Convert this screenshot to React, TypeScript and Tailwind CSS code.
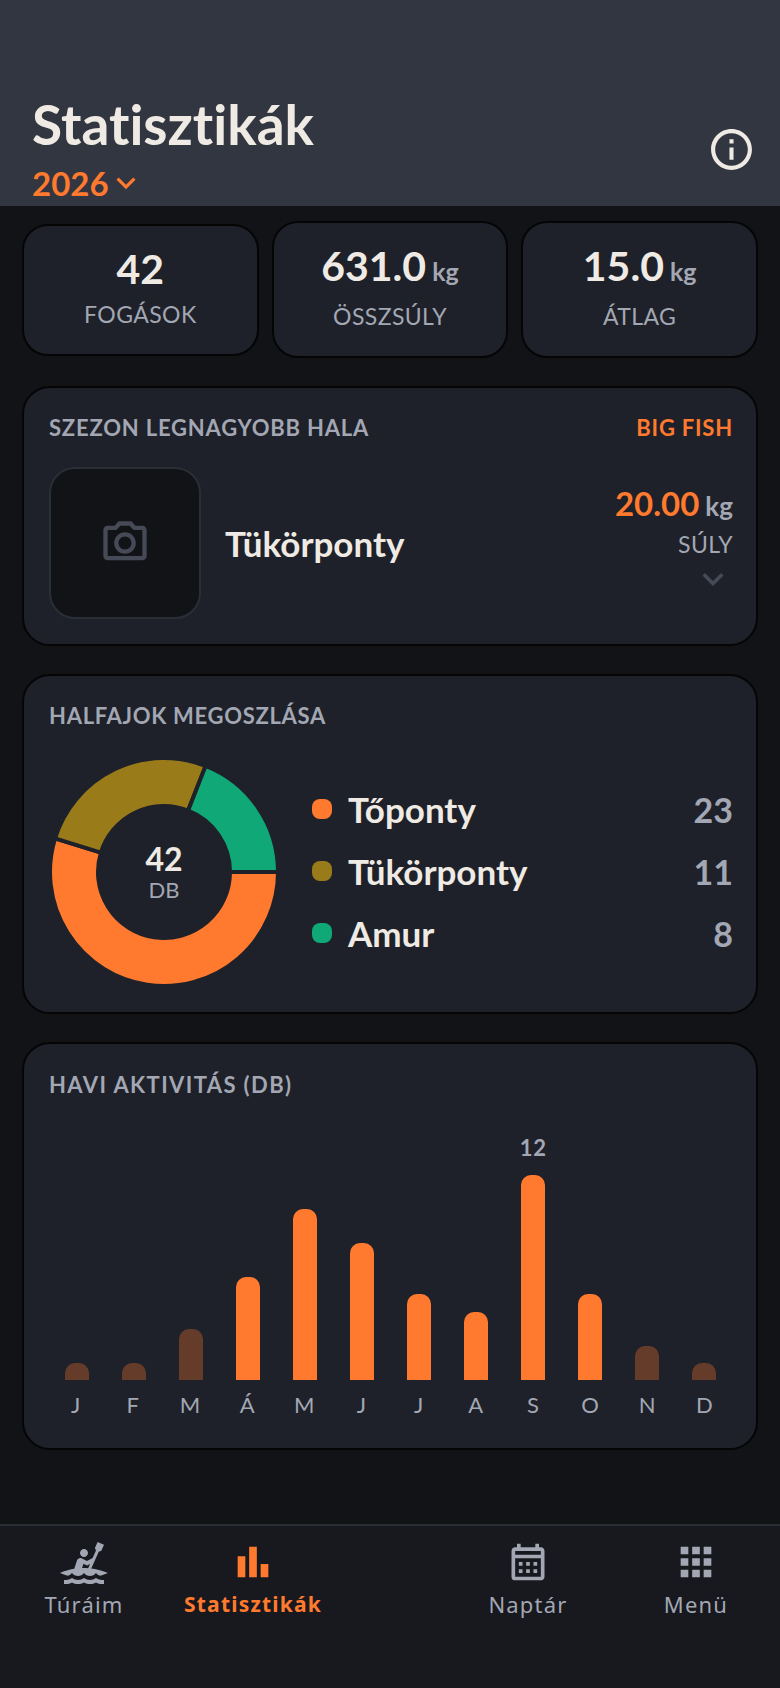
import { MdKayaking, MdBarChart, MdOutlineCalendarMonth, MdApps, MdInfoOutline, MdKeyboardArrowDown, MdOutlinePhotoCamera } from "react-icons/md";

const months = [
  { l: "J", h: "h-[17px]", dim: true },
  { l: "F", h: "h-[17px]", dim: true },
  { l: "M", h: "h-[51px]", dim: true },
  { l: "Á", h: "h-[103px]", dim: false },
  { l: "M", h: "h-[171px]", dim: false },
  { l: "J", h: "h-[137px]", dim: false },
  { l: "J", h: "h-[86px]", dim: false },
  { l: "A", h: "h-[68px]", dim: false },
  { l: "S", h: "h-[205px]", dim: false, top: "12" },
  { l: "O", h: "h-[86px]", dim: false },
  { l: "N", h: "h-[34px]", dim: true },
  { l: "D", h: "h-[17px]", dim: true },
];

const legend = [
  { n: "Tőponty", v: 23, c: "bg-[#ff7a2e]" },
  { n: "Tükörponty", v: 11, c: "bg-[#9a7b1a]" },
  { n: "Amur", v: 8, c: "bg-[#0fa876]" },
];

function arc(a0: number, a1: number) {
  const R = 114, r = 66, c = 114;
  const p = (rad: number, a: number) => {
    const t = (a * Math.PI) / 180;
    return `${(c + rad * Math.cos(t)).toFixed(2)} ${(c + rad * Math.sin(t)).toFixed(2)}`;
  };
  const large = a1 - a0 > 180 ? 1 : 0;
  return `M${p(R, a0)}A${R} ${R} 0 ${large} 1 ${p(R, a1)}L${p(r, a1)}A${r} ${r} 0 ${large} 0 ${p(r, a0)}Z`;
}

function Donut() {
  const a = (23 / 42) * 360;
  const b = a + (11 / 42) * 360;
  return (
    <svg width="228" height="228" viewBox="0 0 228 228" className="block">
      <path d={arc(0, a)} fill="#ff7a2e" stroke="#1e2129" strokeWidth="4" />
      <path d={arc(a, b)} fill="#9a7b1a" stroke="#1e2129" strokeWidth="4" />
      <path d={arc(b, 360)} fill="#0fa876" stroke="#1e2129" strokeWidth="4" />
    </svg>
  );
}

function Stat({ v, unit, label, tall }: { v: string; unit?: string; label: string; tall?: boolean }) {
  return (
    <div className={`flex flex-col items-center justify-center rounded-[26px] border-2 border-[#050506] bg-[#1e2129] pb-[7px] ${tall ? "h-[137px]" : "h-[132px]"}`}>
      <div className="flex items-baseline gap-[6px] leading-[48px]">
        <span className="text-[41px] font-bold text-[#efebe4]">{v}</span>
        {unit && <span className="text-[25px] font-bold text-[#a3a7b3]">{unit}</span>}
      </div>
      <div className="mt-[7px] text-[23px] leading-[28px] tracking-[0.4px] text-[#a3a7b3]">{label}</div>
    </div>
  );
}

function NavItem({ icon, label, active }: { icon: React.ReactNode; label: string; active?: boolean }) {
  return (
    <div className={`flex flex-col items-center font-['Noto_Sans'] ${active ? "text-[#ff7a2e]" : "text-[#a3a7b3]"}`}>
      <div className="flex h-[48px] items-center justify-center">{icon}</div>
      <span className={`mt-[4px] leading-[28px] tracking-[1.2px] ${active ? "text-[21px] font-bold" : "text-[22px] font-normal"}`}>{label}</span>
    </div>
  );
}

export default function App() {
  return (
    <div className="flex min-h-[1688px] w-[780px] flex-col bg-[#111317] font-['Lato','Noto_Sans',sans-serif] text-[#efebe4] [font-variant-ligatures:none]">
      <header className="flex h-[206px] items-end justify-between bg-[#323640] pl-[32px] pr-[24px]">
        <div className="flex flex-col">
          <h1 className="mb-[9px] text-[55px] font-bold leading-[60px]">Statisztikák</h1>
          <div className="mb-[3px] flex items-center gap-[-2px] text-[#ff7a2e]">
            <span className="mr-[-2px] text-[33px] font-bold leading-[40px]">2026</span>
            <MdKeyboardArrowDown size={38} />
          </div>
        </div>
        <MdInfoOutline size={49} className="mb-[32px]" />
      </header>

      <main className="flex flex-1 flex-col gap-[28px] px-[22px] pt-[15px]">
        <div className="grid grid-cols-3 items-center gap-[13px]">
          <Stat v="42" label="FOGÁSOK" />
          <Stat v="631.0" unit="kg" label="ÖSSZSÚLY" tall />
          <Stat v="15.0" unit="kg" label="ÁTLAG" tall />
        </div>

        <section className="h-[260px] rounded-[28px] border-2 border-[#050506] bg-[#1e2129] pl-[25px] pr-[23px] pt-[26px]">
          <div className="flex items-center justify-between text-[22px] font-bold leading-[28px] tracking-[0.8px]">
            <span className="text-[#a3a7b3]">SZEZON LEGNAGYOBB HALA</span>
            <span className="text-[#ff7a2e]">BIG FISH</span>
          </div>
          <div className="mt-[25px] flex items-center">
            <div className="flex h-[152px] w-[152px] items-center justify-center rounded-[26px] border-2 border-[#2a2e37] bg-[#111317] text-[#454a56]">
              <MdOutlinePhotoCamera size={52} />
            </div>
            <div className="ml-[24px] flex-1 text-[35px] font-bold">Tükörponty</div>
            <div className="flex flex-col items-end self-start pt-[16px]">
              <div className="flex items-baseline gap-[6px] leading-[40px]">
                <span className="text-[33px] font-bold text-[#ff7a2e]">20.00</span>
                <span className="text-[26px] font-bold text-[#a3a7b3]">kg</span>
              </div>
              <div className="mt-[4px] text-[23px] leading-[28px] tracking-[0.4px] text-[#a3a7b3]">SÚLY</div>
              <MdKeyboardArrowDown size={42} className="mr-[-1px] text-[#454a56]" />
            </div>
          </div>
        </section>

        <section className="h-[340px] rounded-[28px] border-2 border-[#050506] bg-[#1e2129] pl-[25px] pr-[23px] pt-[26px]">
          <div className="text-[22px] font-bold leading-[28px] tracking-[0.7px] text-[#a3a7b3]">HALFAJOK MEGOSZLÁSA</div>
          <div className="mt-[28px] flex items-center">
            <div className="relative ml-[1px] h-[228px] w-[228px] shrink-0">
              <Donut />
              <div className="absolute inset-0 flex flex-col items-center justify-center">
                <span className="text-[32px] font-bold leading-[36px]">42</span>
                <span className="text-[22px] leading-[26px] text-[#a3a7b3]">DB</span>
              </div>
            </div>
            <div className="mb-[2px] ml-[34px] flex flex-1 flex-col gap-[18px]">
              {legend.map((r) => (
                <div key={r.n} className="flex h-[44px] items-center">
                  <span className={`h-[20px] w-[20px] rounded-[8px] ${r.c}`} />
                  <span className="ml-[16px] flex-1 text-[35px] font-bold">{r.n}</span>
                  <span className="text-[34px] font-bold text-[#a3a7b3]">{r.v}</span>
                </div>
              ))}
            </div>
          </div>
        </section>

        <section className="h-[408px] rounded-[28px] border-2 border-[#050506] bg-[#1e2129] pl-[25px] pr-[23px] pt-[27px]">
          <div className="text-[22px] font-bold leading-[28px] tracking-[1.4px] text-[#a3a7b3]">HAVI AKTIVITÁS (DB)</div>
          <div className="ml-[-1px] mt-[35px] grid h-[246px] grid-cols-12">
            {months.map((m, i) => (
              <div key={i} className="flex flex-col items-center justify-end">
                {m.top && <span className="mb-[13px] text-[22px] font-bold leading-[28px] tracking-[0.8px] text-[#a3a7b3]">{m.top}</span>}
                <div className={`w-[24px] rounded-t-[10px] ${m.h} ${m.dim ? "bg-[#653c2a]" : "bg-[#ff7a2e]"}`} />
              </div>
            ))}
          </div>
          <div className="ml-[-2px] mt-[11px] grid grid-cols-12">
            {months.map((m, i) => (
              <span key={i} className="text-center text-[22px] leading-[28px] text-[#a3a7b3]">{m.l}</span>
            ))}
          </div>
        </section>
      </main>

      <nav className="grid h-[164px] grid-cols-[168px_170px_274px_168px] border-t-2 border-[#2a2e37] bg-[#17191e] pt-[12px]">
        <NavItem icon={<MdKayaking size={48} />} label="Túráim" />
        <NavItem icon={<MdBarChart size={46} />} label="Statisztikák" active />
        <div className="pl-[106px]"><NavItem icon={<MdOutlineCalendarMonth size={44} />} label="Naptár" /></div>
        <NavItem icon={<MdApps size={46} />} label="Menü" />
      </nav>
    </div>
  );
}
